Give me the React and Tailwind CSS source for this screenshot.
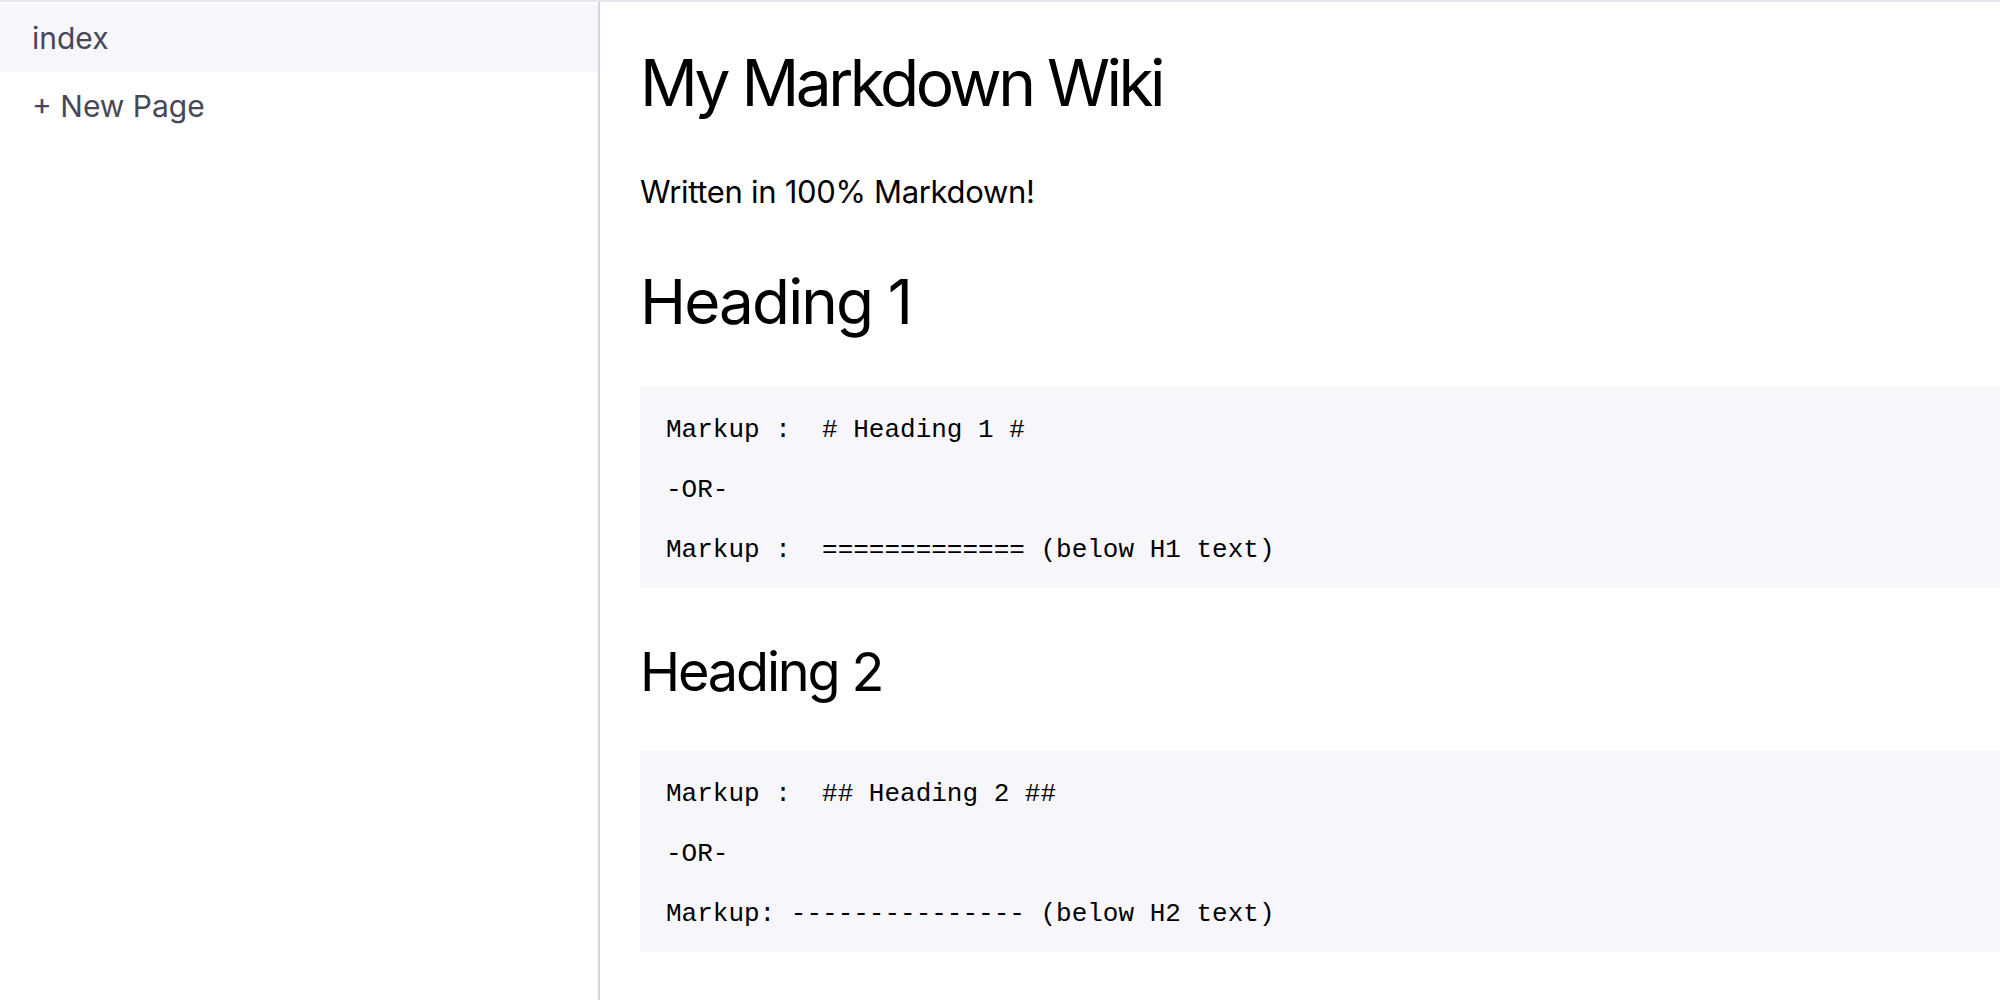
import React from "react";

const pages = [
  { id: "index", title: "index", active: true },
];

const CodeBlock = ({ lines }) => (
  <div className="bg-[#f7f7fb] pt-[26px] pb-[21px] pl-[26px] flex flex-col gap-[26px]">
    {lines.map((line, i) => (
      <pre
        key={i}
        className="text-[26px] leading-[34px] text-black whitespace-pre"
        style={{ fontFamily: '"Liberation Mono", "Courier New", monospace' }}
      >
        {line}
      </pre>
    ))}
  </div>
);

const App = () => {
  return (
    <div
      className="h-screen w-full flex flex-col bg-white overflow-hidden"
      style={{ fontFamily: 'Inter, "Noto Sans", sans-serif' }}
    >
      {/* top strip */}
      <div className="h-[2px] bg-[#e7e5ef] shrink-0"></div>

      <div className="flex flex-1 min-h-0">
        {/* Sidebar */}
        <aside className="w-[600px] shrink-0 border-r-2 border-[#d4d2e3] pt-[2px]">
          {pages.map((p) => (
            <div
              key={p.id}
              className={`h-[68px] flex items-center pl-[32px] text-[30px] text-[#48475a] ${
                p.active ? "bg-[#f7f6fb]" : ""
              }`}
            >
              {p.title}
            </div>
          ))}
          <div className="h-[68px] flex items-center pl-[32px] text-[30px] text-[#48475a] cursor-pointer">
            + New Page
          </div>
        </aside>

        {/* Content */}
        <main className="flex-1 min-w-0 pl-[40px] pt-[42px] text-black">
          <h1 className="text-[64px] leading-[77px] font-normal tracking-[-0.055em]">
            My Markdown Wiki
          </h1>
          <p className="mt-[48px] text-[31px] leading-[46px] tracking-[-0.01em]">
            Written in 100% Markdown!
          </p>

          <h2 className="mt-[50px] text-[62px] leading-[74px] font-normal tracking-[-0.03em]">
            Heading 1
          </h2>
          <div className="mt-[48px]">
            <CodeBlock
              lines={[
                "Markup :  # Heading 1 #",
                "-OR-",
                "Markup :  ============= (below H1 text)",
              ]}
            />
          </div>

          <h3 className="mt-[51px] text-[54px] leading-[65px] font-normal tracking-[-0.04em]">
            Heading 2
          </h3>
          <div className="mt-[47px]">
            <CodeBlock
              lines={[
                "Markup :  ## Heading 2 ##",
                "-OR-",
                "Markup: --------------- (below H2 text)",
              ]}
            />
          </div>
        </main>
      </div>
    </div>
  );
};

export default App;
